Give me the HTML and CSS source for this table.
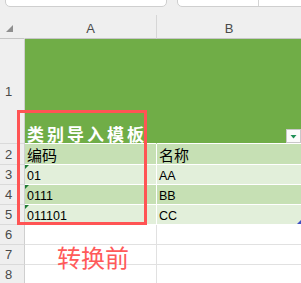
FILE: index.html
```html
<!doctype html>
<html lang="zh-CN">

<head>
  <title>类别导入模板</title>
  <meta charset="utf-8" />
  <link rel="stylesheet" href="styles.css">
</head>

<body>
  <div class="app">
    <!-- name box + formula bar, only their lower edge shows -->
    <div class="topbar">
      <div class="box name-box"></div>
      <div class="box formula-box"><span class="sep"></span></div>
    </div>

    <div class="sheet">
      <div class="corner"><span class="select-all"></span></div>
      <div class="col-head">A</div>
      <div class="col-head">B</div>

      <div class="row-head">1</div>
      <div class="cell title-cell"><span class="title">类别导入模板</span></div>
      <div class="cell title-cell filter-cell">
        <span class="filter">
          <svg width="13" height="12" viewBox="0 0 13 12">
            <polygon points="3.5,5 9.5,5 6.5,8.5" fill="#1f8f57" />
          </svg>
        </span>
      </div>

      <div class="row-head">2</div>
      <div class="cell band-a cjk">编码</div>
      <div class="cell band-a cjk">名称</div>

      <div class="row-head">3</div>
      <div class="cell band-b text-num">01</div>
      <div class="cell band-b">AA</div>

      <div class="row-head">4</div>
      <div class="cell band-a text-num">0111</div>
      <div class="cell band-a">BB</div>

      <div class="row-head">5</div>
      <div class="cell band-b text-num">011101</div>
      <div class="cell band-b table-end">CC</div>

      <div class="row-head">6</div>
      <div class="cell"></div>
      <div class="cell"></div>

      <div class="row-head">7</div>
      <div class="cell"></div>
      <div class="cell"></div>

      <div class="row-head">8</div>
      <div class="cell"></div>
      <div class="cell"></div>
    </div>

    <!-- annotation drawn on top of the sheet -->
    <div class="outline"></div>
    <div class="note">转换前</div>
  </div>
</body>

</html>
```

FILE: styles.css
```css
html, body {
  margin: 0;
  padding: 0;
  overflow: hidden;
}

body {
  background: #efefef;
  font-family: "Liberation Sans", "Noto Sans CJK SC", sans-serif;
  font-size: 12.5px;
  color: #000;
}

.app {
  position: relative;
  width: 301px;
  height: 283px;
  overflow: hidden;
}

/* top bar */
.topbar {
  display: flex;
  gap: 10px;
  height: 15px;
  padding-left: 5px;
}

.box {
  box-sizing: border-box;
  height: 12px;
  margin-top: -5px;
  background: #fff;
  border: 1px solid #cfcfcf;
  border-radius: 5px;
}

.name-box {
  width: 162px;
}

.formula-box {
  flex: 1;
  margin-right: -10px;
  position: relative;
}

.formula-box .sep {
  position: absolute;
  left: 80px;
  top: 0;
  bottom: 0;
  border-left: 1px solid #d4d4d4;
}

/* grid */
.sheet {
  display: grid;
  grid-template-columns: 25px 132px 145px;
  grid-template-rows: 24px 105px 21px repeat(6, 20px);
}

.sheet > div {
  box-sizing: border-box;
  border-right: 1px solid #e1e1e1;
  border-bottom: 1px solid #e1e1e1;
  overflow: hidden;
  white-space: nowrap;
}

.corner {
  display: flex;
  align-items: flex-end;
  padding: 0 0 6px 6px;
  background: #efefef;
  border-bottom-color: #c6c6c6 !important;
  border-right-color: #efefef !important;
}

.select-all {
  width: 7px;
  height: 7px;
  background: #8f8f8f;
  clip-path: polygon(100% 0, 100% 100%, 0 100%);
}

.col-head {
  display: flex;
  align-items: center;
  justify-content: center;
  padding-top: 3px;
  background: #efefef;
  color: #4a4a4a;
  font-size: 13px;
  border-right-color: #d6d6d6 !important;
  border-bottom-color: #c6c6c6 !important;
}

.row-head {
  display: flex;
  align-items: center;
  justify-content: center;
  padding-right: 7px;
  background: #efefef;
  color: #4a4a4a;
  font-size: 13px;
  border-right-color: #cfcfcf !important;
  border-bottom-color: #dadada !important;
}

.cell {
  display: flex;
  align-items: flex-end;
  padding: 0 2px;
  line-height: 15px;
  background: #fff;
}

.title-cell {
  background: #70ad47;
  border-right-color: #70ad47 !important;
  border-bottom-color: #fff !important;
}

.title {
  color: #fff;
  font-weight: bold;
  font-size: 17px;
  line-height: 17px;
  letter-spacing: 3px;
  margin-bottom: -1px;
}

.filter-cell {
  justify-content: flex-end;
  padding: 0;
}

.filter {
  display: block;
  box-sizing: border-box;
  width: 15px;
  height: 14px;
  background: #fbfbfb;
  border: 1px solid #c8c8c8;
}

.filter svg {
  display: block;
}

.band-a {
  background: #c6e0b4;
  border-color: #fff !important;
}

.band-b {
  background: #e2efda;
  border-color: #fff !important;
}

.cjk {
  font-size: 15px;
  line-height: 17px;
}

/* number-stored-as-text marker */
.text-num {
  position: relative;
}

.text-num::before {
  content: "";
  position: absolute;
  left: 0;
  top: 0;
  width: 4px;
  height: 4px;
  background: #1e7b34;
  clip-path: polygon(0 0, 100% 0, 0 100%);
}

/* table resize handle */
.table-end {
  position: relative;
}

.table-end::after {
  content: "";
  position: absolute;
  right: 0;
  bottom: 0;
  width: 4px;
  height: 4px;
  background: #3f51c4;
  clip-path: polygon(100% 0, 100% 100%, 0 100%);
}

/* annotation */
.outline {
  position: absolute;
  left: 17px;
  top: 110px;
  width: 130px;
  height: 115px;
  box-sizing: border-box;
  border: 3px solid #ff5454;
}

.note {
  position: absolute;
  left: 57px;
  top: 245px;
  font-family: "Noto Sans CJK SC", sans-serif;
  font-size: 24px;
  line-height: 24px;
  color: #ff5a5a;
}
```
